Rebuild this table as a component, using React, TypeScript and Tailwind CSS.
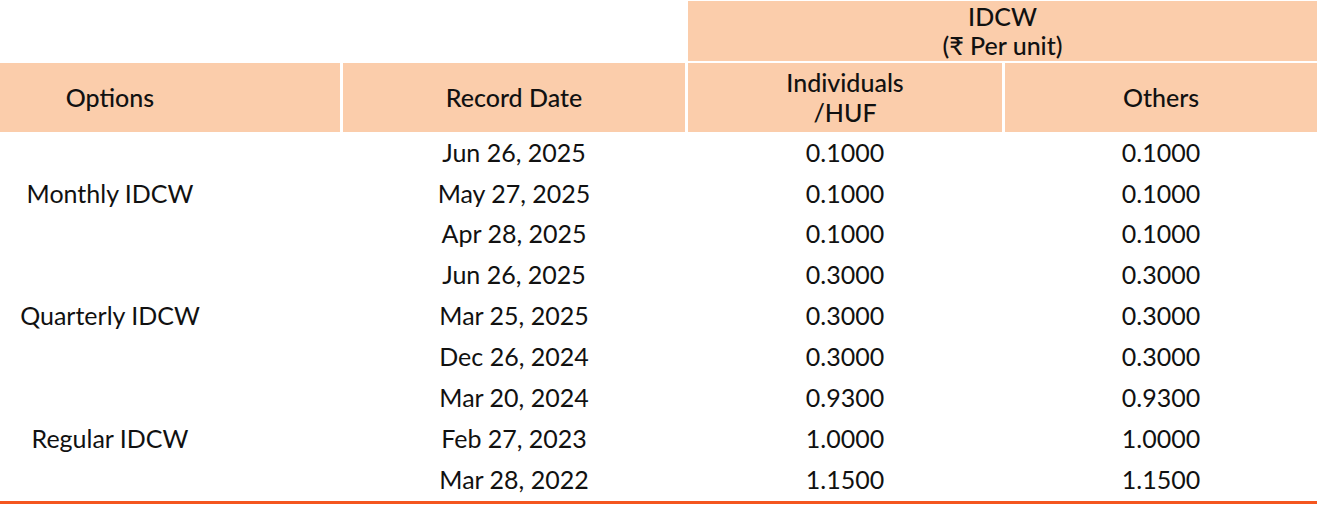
import React from 'react';

interface Payout {
  date: string;
  individuals: string;
  others: string;
}

interface OptionGroup {
  name: string;
  rows: Payout[];
}

const GROUPS: OptionGroup[] = [
  {
    name: 'Monthly IDCW',
    rows: [
      { date: 'Jun 26, 2025', individuals: '0.1000', others: '0.1000' },
      { date: 'May 27, 2025', individuals: '0.1000', others: '0.1000' },
      { date: 'Apr 28, 2025', individuals: '0.1000', others: '0.1000' },
    ],
  },
  {
    name: 'Quarterly IDCW',
    rows: [
      { date: 'Jun 26, 2025', individuals: '0.3000', others: '0.3000' },
      { date: 'Mar 25, 2025', individuals: '0.3000', others: '0.3000' },
      { date: 'Dec 26, 2024', individuals: '0.3000', others: '0.3000' },
    ],
  },
  {
    name: 'Regular IDCW',
    rows: [
      { date: 'Mar 20, 2024', individuals: '0.9300', others: '0.9300' },
      { date: 'Feb 27, 2023', individuals: '1.0000', others: '1.0000' },
      { date: 'Mar 28, 2022', individuals: '1.1500', others: '1.1500' },
    ],
  },
];

const cols = 'grid grid-cols-[340px_342px_314px_1fr] gap-x-[3px]';

const App: React.FC = () => {
  return (
    <div className="w-[1317px] bg-white font-['Lato','Liberation_Sans',sans-serif] text-[25px] leading-[29.5px] text-[#111]">
      {/* Header */}
      <div className={`${cols} gap-y-[2px] pt-[1px] font-medium`}>
        <div className="col-span-2 h-[60px]" />
        <div className="col-span-2 flex h-[60px] flex-col items-center justify-center bg-[#fbcdab]">
          <span>IDCW</span>
          <span>(₹ Per unit)</span>
        </div>

        <div className="flex h-[69px] items-center justify-center bg-[#fbcdab] pr-[120px]">
          Options
        </div>
        <div className="flex h-[69px] items-center justify-center bg-[#fbcdab]">
          Record Date
        </div>
        <div className="flex h-[69px] flex-col items-center justify-center bg-[#fbcdab]">
          <span>Individuals</span>
          <span>/HUF</span>
        </div>
        <div className="flex h-[69px] items-center justify-center bg-[#fbcdab]">
          Others
        </div>
      </div>

      {/* Body */}
      <div className={`${cols} grid-rows-[repeat(9,40.9px)] border-b-[3px] border-[#f4561f] pb-[1px]`}>
        {GROUPS.map((group) => (
          <React.Fragment key={group.name}>
            <div className="row-span-3 flex items-center justify-center pr-[120px]">
              {group.name}
            </div>
            {group.rows.map((row, i) => (
              <React.Fragment key={i}>
                <div className="col-start-2 flex items-center justify-center">{row.date}</div>
                <div className="flex items-center justify-center">{row.individuals}</div>
                <div className="flex items-center justify-center">{row.others}</div>
              </React.Fragment>
            ))}
          </React.Fragment>
        ))}
      </div>
    </div>
  );
};

export default App;
